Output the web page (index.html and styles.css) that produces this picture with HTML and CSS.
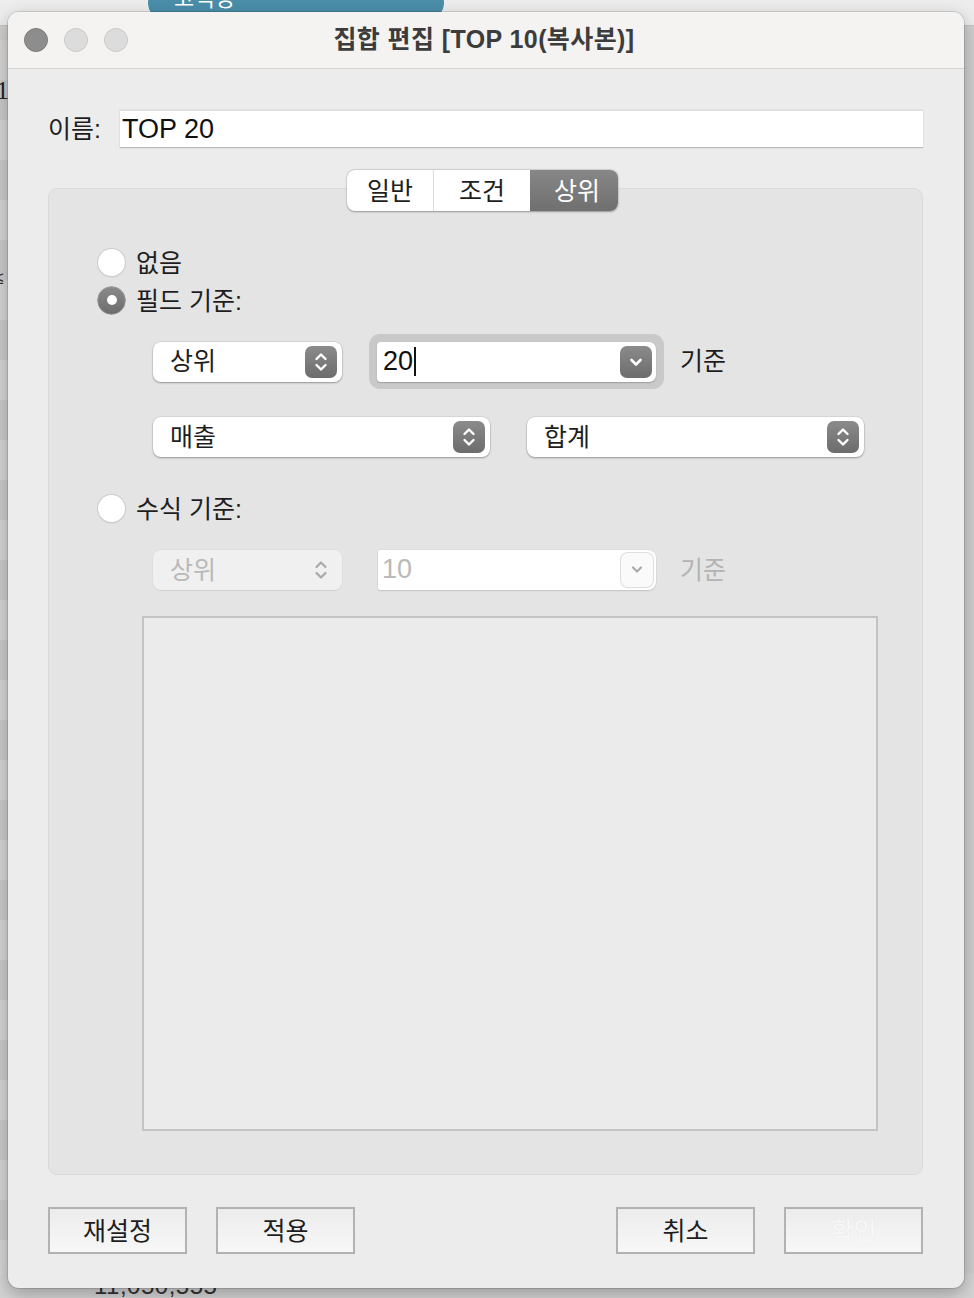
FILE: index.html
```html
<!DOCTYPE html>
<html lang="ko">
<head>
<meta charset="utf-8">
<title>집합 편집</title>
<link rel="stylesheet" href="styles.css">
</head>
<body>
<div class="backdrop">
  <div class="bg-top">
    <div class="bg-pill"><span class="bg-pill-text">고객명</span><span class="bg-pill-mark"></span></div>
  </div>
  <div class="bg-left"><span class="bg-one">1</span><span class="bg-le">≤</span></div>
  <div class="bg-bottom"><span class="bg-num">11,050,555</span></div>
</div>

<div class="dialog">
  <div class="titlebar">
    <div class="lights">
      <span class="light light-close"></span>
      <span class="light"></span>
      <span class="light"></span>
    </div>
    <div class="title">집합 편집 [TOP 10(복사본)]</div>
  </div>

  <div class="content">
    <div class="name-row">
      <span class="name-label">이름:</span>
      <div class="name-input">TOP 20</div>
    </div>

    <div class="tabs">
      <span class="tab tab-1">일반</span>
      <span class="tab tab-2">조건</span>
      <span class="tab tab-3 active">상위</span>
    </div>

    <div class="group">
      <div class="radio-row row-none"><span class="radio"></span><span class="radio-label">없음</span></div>
      <div class="radio-row row-field"><span class="radio checked"></span><span class="radio-label">필드 기준:</span></div>

      <div class="ctl-row row-1">
        <div class="select sel-short">
          <span class="sel-text">상위</span>
          <span class="stepper">
            <svg width="32" height="32" viewBox="0 0 32 32"><path d="M11.5 13 L16 8.5 L20.5 13 M11.5 19 L16 23.5 L20.5 19" fill="none" stroke="#fff" stroke-width="2.4" stroke-linecap="round" stroke-linejoin="round"/></svg>
          </span>
        </div>
        <div class="focus-ring">
          <div class="combo">
            <span class="combo-text">20<span class="caret"></span></span>
            <span class="drop">
              <svg width="32" height="32" viewBox="0 0 32 32"><path d="M11.5 14 L16 18.5 L20.5 14" fill="none" stroke="#fff" stroke-width="2.6" stroke-linecap="round" stroke-linejoin="round"/></svg>
            </span>
          </div>
        </div>
        <span class="suffix">기준</span>
      </div>

      <div class="ctl-row row-2">
        <div class="select sel-wide">
          <span class="sel-text">매출</span>
          <span class="stepper">
            <svg width="32" height="32" viewBox="0 0 32 32"><path d="M11.5 13 L16 8.5 L20.5 13 M11.5 19 L16 23.5 L20.5 19" fill="none" stroke="#fff" stroke-width="2.4" stroke-linecap="round" stroke-linejoin="round"/></svg>
          </span>
        </div>
        <div class="select sel-wide">
          <span class="sel-text">합계</span>
          <span class="stepper">
            <svg width="32" height="32" viewBox="0 0 32 32"><path d="M11.5 13 L16 8.5 L20.5 13 M11.5 19 L16 23.5 L20.5 19" fill="none" stroke="#fff" stroke-width="2.4" stroke-linecap="round" stroke-linejoin="round"/></svg>
          </span>
        </div>
      </div>

      <div class="radio-row row-formula"><span class="radio"></span><span class="radio-label">수식 기준:</span></div>

      <div class="ctl-row row-3 disabled">
        <div class="select sel-short sel-disabled">
          <span class="sel-text">상위</span>
          <span class="stepper stepper-disabled">
            <svg width="32" height="32" viewBox="0 0 32 32"><path d="M11.5 13 L16 8.5 L20.5 13 M11.5 19 L16 23.5 L20.5 19" fill="none" stroke="#a9a9a9" stroke-width="2.2" stroke-linecap="round" stroke-linejoin="round"/></svg>
          </span>
        </div>
        <div class="combo combo-disabled">
          <span class="combo-text">10</span>
          <span class="drop drop-disabled">
            <svg width="32" height="32" viewBox="0 0 32 32"><path d="M12 14.5 L16 18.5 L20 14.5" fill="none" stroke="#a9a9a9" stroke-width="2.2" stroke-linecap="round" stroke-linejoin="round"/></svg>
          </span>
        </div>
        <span class="suffix suffix-disabled">기준</span>
      </div>

      <div class="formula-box"></div>
    </div>

    <div class="footer">
      <div class="btn-group">
        <span class="btn">재설정</span>
        <span class="btn">적용</span>
      </div>
      <div class="btn-group">
        <span class="btn">취소</span>
        <span class="btn btn-disabled">확인</span>
      </div>
    </div>
  </div>
</div>
</body>
</html>
```

FILE: styles.css
```css
* { box-sizing: border-box; }

html, body {
  margin: 0;
  padding: 0;
}

body {
  width: 974px;
  height: 1298px;
  overflow: hidden;
  position: relative;
  background: #cfcfcf;
  font-family: "Liberation Sans", "Noto Sans CJK KR", sans-serif;
  color: #1e1e1e;
}

/* ---------- backdrop (app behind the dialog) ---------- */
.backdrop {
  position: absolute;
  inset: 0;
}

.bg-top {
  height: 40px;
  background: #ededed;
  border-bottom: 1px solid #c4c4c4;
  padding-left: 148px;
}

.bg-pill {
  width: 296px;
  height: 34px;
  margin-top: -14px;
  border-radius: 17px;
  background: #4a8ea9;
  display: flex;
  align-items: flex-end;
  justify-content: space-between;
  padding: 0 32px 8px 26px;
  color: #fff;
  font-size: 22px;
  font-family: "Noto Sans CJK KR", sans-serif;
}

.bg-pill-mark {
  width: 12px;
  height: 3px;
  background: #fff;
  margin-bottom: 12px;
}

.bg-left {
  position: absolute;
  left: 0;
  top: 40px;
  width: 8px;
  height: 1250px;
  background: repeating-linear-gradient(#d6d6d6 0 40px, #cbcbcb 40px 80px);
  overflow: hidden;
}

.bg-one {
  position: absolute;
  left: -4px;
  top: 36px;
  font-size: 26px;
  color: #222;
  font-family: "Liberation Serif", serif;
}

.bg-le {
  position: absolute;
  left: -6px;
  top: 228px;
  font-size: 18px;
  color: #333;
}

.bg-bottom {
  position: absolute;
  left: 0;
  bottom: 0;
  width: 974px;
  height: 24px;
  background: #d4d4d4;
}

.bg-num {
  position: absolute;
  left: 94px;
  top: -2px;
  font-size: 24px;
  color: #333;
  letter-spacing: 0.5px;
}

/* ---------- dialog ---------- */
.dialog {
  position: absolute;
  left: 8px;
  top: 12px;
  width: 956px;
  height: 1276px;
  border-radius: 11px;
  background: #ececec;
  box-shadow: 0 0 0 1px rgba(0, 0, 0, 0.12), 0 6px 18px rgba(0, 0, 0, 0.28);
  overflow: hidden;
  display: flex;
  flex-direction: column;
}

.titlebar {
  height: 57px;
  flex: none;
  background: #f4f3f1;
  border-bottom: 1px solid #d3d3d3;
  display: flex;
  align-items: center;
  position: relative;
}

.lights {
  display: flex;
  gap: 16px;
  padding-left: 16px;
}

.light {
  width: 24px;
  height: 24px;
  border-radius: 50%;
  background: #dcdcdc;
  border: 1px solid #c9c9c9;
}

.light-close {
  background: #8d8d8d;
  border-color: #7c7c7c;
}

.title {
  position: absolute;
  left: 0;
  right: 0;
  top: 0;
  bottom: 0;
  display: flex;
  align-items: center;
  justify-content: center;
  font-weight: bold;
  font-size: 25px;
  letter-spacing: 0.4px;
  color: #3c3c3c;
  padding-right: 4px;
  padding-bottom: 7px;
  pointer-events: none;
}

.content {
  flex: 1;
  display: flex;
  flex-direction: column;
  padding: 41px 41px 0 40px;
}

/* name row */
.name-row {
  display: flex;
  align-items: center;
  height: 38px;
}

.name-label {
  width: 72px;
  font-size: 25px;
  color: #1e1e1e;
  padding-bottom: 4px;
}

.name-input {
  flex: 1;
  height: 38px;
  background: #fff;
  border-top: 1px solid #dedede;
  border-bottom: 1px solid #bdbdbd;
  box-shadow: 0 0 0 0.5px #d8d8d8;
  font-size: 27px;
  line-height: 36px;
  padding-left: 2px;
  color: #111;
}

/* tabs */
.tabs {
  margin-top: 22px;
  align-self: center;
  margin-left: -6px;
  display: flex;
  height: 41px;
  border-radius: 8px;
  background: #fff;
  box-shadow: 0 0.5px 2px rgba(0, 0, 0, 0.32), 0 0 0 0.5px rgba(0, 0, 0, 0.08);
  position: relative;
  z-index: 1;
  overflow: hidden;
}

.tab {
  display: flex;
  align-items: center;
  justify-content: center;
  font-size: 25px;
  color: #1e1e1e;
  padding-bottom: 4px;
}

.tab-1 { width: 87px; border-right: 1px solid #dcdcdc; }
.tab-2 { width: 96px; }
.tab-3 { width: 88px; padding-left: 6px; }

.tab.active {
  background: linear-gradient(#878787, #6f6f6f);
  color: #fff;
}

/* group box */
.group {
  margin-top: -23px;
  height: 987px;
  border: 1px solid #dadada;
  border-radius: 9px;
  background: #e4e4e4;
  display: flex;
  flex-direction: column;
  padding-left: 49px;
}

.radio-row {
  display: flex;
  align-items: center;
  gap: 11px;
  height: 30px;
  font-size: 25px;
  color: #1e1e1e;
}

.radio-label {
  padding-bottom: 3px;
}

.row-none { margin-top: 58px; }
.row-field { margin-top: 8px; }
.row-formula { margin-top: 36px; }

.radio {
  width: 27px;
  height: 27px;
  border-radius: 50%;
  background: #fff;
  box-shadow: 0 0 0 1px #cdcdcd, 0 1px 1.5px rgba(0, 0, 0, 0.18);
  position: relative;
  flex: none;
}

.radio.checked {
  background: linear-gradient(#8a8a8a, #6d6d6d);
  box-shadow: 0 0 0 0.5px #6a6a6a;
}

.radio.checked::after {
  content: "";
  position: absolute;
  left: 8.5px;
  top: 8.5px;
  width: 10px;
  height: 10px;
  border-radius: 50%;
  background: #fff;
}

/* control rows */
.ctl-row {
  display: flex;
  align-items: center;
  padding-left: 55px;
}

.row-1 { margin-top: 19px; height: 55px; }
.row-2 { margin-top: 28px; height: 40px; gap: 37px; }
.row-3 { margin-top: 25px; height: 44px; }

.select {
  height: 40px;
  border-radius: 8px;
  background: #fff;
  box-shadow: 0 1px 2px rgba(0, 0, 0, 0.32), 0 0 0 0.5px rgba(0, 0, 0, 0.1);
  display: flex;
  align-items: center;
  justify-content: space-between;
  padding: 0 5px 0 17px;
  font-size: 25px;
  color: #1e1e1e;
}

.sel-text {
  padding-bottom: 5px;
}

.sel-short { width: 189px; }
.sel-wide { width: 337px; }

.stepper {
  width: 32px;
  height: 32px;
  border-radius: 7px;
  background: linear-gradient(#8b8b8b, #6c6c6c);
  display: flex;
}

.stepper-disabled {
  background: none;
}

.sel-disabled {
  background: #f0f0f0;
  box-shadow: 0 0 0 0.5px rgba(0, 0, 0, 0.04), 0 1px 1px rgba(0, 0, 0, 0.06);
  color: #b9b9b9;
}

.focus-ring {
  margin-left: 27px;
  width: 295px;
  height: 55px;
  border-radius: 11px;
  background: #c9c9c9;
  padding: 8px 8px 7px 8px;
}

.combo {
  height: 40px;
  background: #fff;
  border-radius: 4px 7px 7px 4px;
  box-shadow: 0 1px 1.5px rgba(0, 0, 0, 0.22);
  display: flex;
  align-items: center;
  justify-content: space-between;
  padding: 0 4px 0 6px;
  font-size: 27px;
  color: #111;
}

.combo-text {
  display: flex;
  align-items: center;
  padding-bottom: 2px;
}

.caret {
  width: 2px;
  height: 29px;
  background: #111;
  margin-left: 1px;
}

.drop {
  width: 32px;
  height: 32px;
  border-radius: 7px;
  background: linear-gradient(#8b8b8b, #6c6c6c);
  display: flex;
}

.combo-disabled {
  margin-left: 36px;
  width: 278px;
  color: #b9b9b9;
  border-radius: 2px 8px 8px 2px;
  box-shadow: 0 1px 1.5px rgba(0, 0, 0, 0.12), 0 0 0 0.5px rgba(0, 0, 0, 0.05);
  padding-left: 4px;
  padding-right: 3px;
}

.drop-disabled {
  background: #fafafa;
  box-shadow: 0 0 0 1px #dedede, 0 1px 1px rgba(0, 0, 0, 0.1);
  height: 34px;
}

.suffix {
  margin-left: 16px;
  font-size: 25px;
  color: #1e1e1e;
  padding-bottom: 5px;
}

.suffix-disabled {
  margin-left: 24px;
  color: #b3b3b3;
}

.formula-box {
  margin-top: 24px;
  margin-left: 44px;
  width: 736px;
  height: 515px;
  border: 2px solid #c3c3c3;
  background: #ebebeb;
}

/* footer */
.footer {
  margin-top: 32px;
  display: flex;
  justify-content: space-between;
}

.btn-group {
  display: flex;
  gap: 29px;
}

.btn {
  width: 139px;
  height: 47px;
  border: 2px solid #b2b2b2;
  background: linear-gradient(#ececec, #f7f7f7);
  display: flex;
  align-items: center;
  justify-content: center;
  font-size: 25px;
  color: #1e1e1e;
  padding-bottom: 4px;
}

.btn-disabled {
  color: #f8f8f8;
  text-shadow: 0 0 1px rgba(0, 0, 0, 0.08);
}
```
